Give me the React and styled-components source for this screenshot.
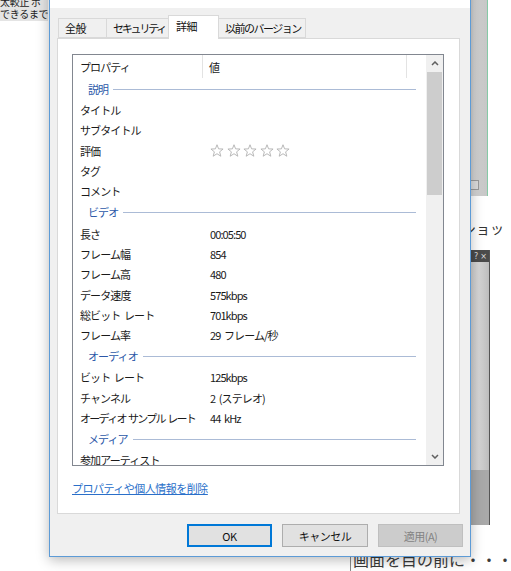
import React from 'react'
import styled, { createGlobalStyle } from 'styled-components'

const GlobalStyle = createGlobalStyle`
  body {
    margin: 0;
    background: #fff;
    font-family: "Noto Sans CJK JP", "Noto Sans", sans-serif;
  }
`

const Desktop = styled.div`
  position: relative;
  width: 511px;
  height: 571px;
  overflow: hidden;
  background: #fff;
`

/* ---- things behind the dialog ---- */

const NoteSnippet = styled.div`
  position: absolute;
  left: 0;
  top: 0;
  width: 48px;
  height: 21px;
  overflow: hidden;
  background: #e4e4e4;
  color: #222;
  font-size: 10px;
  line-height: 12px;
  letter-spacing: -0.3px;
  white-space: nowrap;
  div:first-child { margin-top: -4px; }
`

const SideStrip = styled.div`
  position: absolute;
  left: 455px;
  top: 0;
  width: 33px;
  height: 196px;
  background: linear-gradient(90deg, #bdbdbd 0%, #d4d4d4 60%, #c6c6c6 100%);
  border-right: 1px solid #86c9a6;
  display: flex;
  flex-direction: column;
  justify-content: flex-end;
  align-items: flex-end;
  padding: 0 8px 6px 0;
  box-sizing: border-box;
`

const StripBox = styled.div`
  width: 10px;
  height: 8px;
  border: 1px solid #9a9a9a;
  background: #dcdcdc;
`

const SideText = styled.div`
  position: absolute;
  left: 462px;
  top: 218px;
  font-size: 14px;
  color: #333;
  white-space: nowrap;
`

const MiniWindow = styled.div`
  position: absolute;
  left: 455px;
  top: 250px;
  width: 35px;
  height: 275px;
  display: flex;
  flex-direction: column;
  border-right: 1px solid #555;
  box-sizing: border-box;
`

const MiniTitle = styled.div`
  height: 12px;
  background: #4b4b4b;
  display: flex;
  justify-content: flex-end;
  align-items: center;
  gap: 2px;
  padding-right: 2px;
  color: #ddd;
  font-size: 8px;
  font-family: "DejaVu Sans", sans-serif;
`

const MiniBody = styled.div`
  flex: 1;
  background: linear-gradient(90deg, #c2c2c2, #d6d6d6 70%, #bcbcbc);
`

const MiniFoot = styled.div`
  height: 55px;
  background: #a9a9a9;
`

const BottomLine = styled.div`
  position: absolute;
  left: 350px;
  top: 548px;
  height: 30px;
  width: 1px;
  background: #8a8a8a;
`

const BottomText = styled.div`
  position: absolute;
  left: 353px;
  top: 549px;
  font-size: 16px;
  line-height: 20px;
  color: #3a3a3a;
  white-space: nowrap;
`

/* ---- the properties dialog ---- */

const Dialog = styled.div`
  position: absolute;
  left: 49px;
  top: -21px;
  width: 422px;
  height: 578px;
  box-sizing: border-box;
  border: 1px solid #5d9bd6;
  background: #f0f0f0;
  box-shadow: 0 3px 12px rgba(0, 0, 0, 0.28);
  display: flex;
  flex-direction: column;
  z-index: 2;
`

const TitleBar = styled.div`
  height: 28px;
  background: #fff;
`

const Body = styled.div`
  flex: 1;
  display: flex;
  flex-direction: column;
  padding: 8px 7px 9px 7px;
`

const TabRow = styled.div`
  height: 22px;
  display: flex;
  align-items: flex-end;
  padding-left: 1px;
  position: relative;
  z-index: 1;
`

const Tab = styled.div`
  box-sizing: border-box;
  width: ${p => p.$w}px;
  height: ${p => (p.$active ? 24 : 20)}px;
  margin-right: -1px;
  margin-bottom: ${p => (p.$active ? -1 : 0)}px;
  padding-left: ${p => (p.$active ? 7 : 6)}px;
  padding-top: ${p => (p.$active ? 2 : 1)}px;
  background: ${p => (p.$active ? '#fff' : '#f0f0f0')};
  border: 1px solid #d9d9d9;
  border-bottom: ${p => (p.$active ? 'none' : '1px solid #d9d9d9')};
  font-size: 11px;
  line-height: 16px;
  letter-spacing: ${p => p.$ls}px;
  color: #111;
  white-space: nowrap;
  overflow: hidden;
`

const Panel = styled.div`
  box-sizing: border-box;
  height: 476px;
  margin-right: 3px;
  background: #fff;
  border: 1px solid #d9d9d9;
  padding: 15px 15px 0 14px;
  display: flex;
  flex-direction: column;
`

const ListBox = styled.div`
  box-sizing: border-box;
  height: 412px;
  border: 1px solid #828790;
  display: flex;
  overflow: hidden;
`

const ListContent = styled.div`
  flex: 1;
  overflow: hidden;
  font-size: 11px;
  letter-spacing: -0.9px;
  word-spacing: 2px;
  color: #1a1a1a;
`

const HeaderRow = styled.div`
  height: 23px;
  display: flex;
  align-items: stretch;
`

const HeaderCell = styled.div`
  width: ${p => p.$w}px;
  box-sizing: border-box;
  padding-left: ${p => p.$pad}px;
  border-right: ${p => (p.$divider ? '1px solid #e3e3e3' : 'none')};
  display: flex;
  align-items: center;
`

const GroupRow = styled.div`
  height: 22px;
  display: flex;
  align-items: center;
  padding-left: 15px;
  padding-right: 10px;
  gap: 5px;
  color: #2c58a8;
`

const GroupLine = styled.div`
  flex: 1;
  height: 1px;
  background: #abbbd6;
`

const Row = styled.div`
  height: 20.3px;
  display: flex;
  align-items: center;
`

const PropCell = styled.div`
  width: 130px;
  padding-left: 7px;
  box-sizing: border-box;
  white-space: pre;
  letter-spacing: ${p => (p.$tight ? '-1.7px' : 'inherit')};
  word-spacing: ${p => (p.$tight ? '1.5px' : 'inherit')};
`

const ValueCell = styled.div`
  padding-left: 7px;
  white-space: pre;
  display: flex;
  gap: 2.5px;
`

const ScrollBar = styled.div`
  width: 17px;
  background: #f0f0f0;
  display: flex;
  flex-direction: column;
`

const ScrollArrow = styled.div`
  height: 17px;
  display: flex;
  align-items: center;
  justify-content: center;
`

const ScrollThumb = styled.div`
  height: 123px;
  margin: 0 1px;
  background: #cdcdcd;
`

const ScrollTrack = styled.div`
  flex: 1;
`

const LinkText = styled.a`
  margin-top: 15px;
  font-size: 11px;
  line-height: 14px;
  letter-spacing: -0.5px;
  color: #2a6fc9;
  text-decoration: underline;
  align-self: flex-start;
  cursor: pointer;
`

const ButtonRow = styled.div`
  margin-top: 10px;
  display: flex;
  justify-content: flex-end;
  gap: 10px;
`

const Button = styled.button`
  box-sizing: border-box;
  width: ${p => p.$w}px;
  height: 23px;
  padding: 0;
  font-family: inherit;
  font-size: 11px;
  letter-spacing: -0.5px;
  background: ${p => (p.$disabled ? '#cccccc' : '#e1e1e1')};
  color: ${p => (p.$disabled ? '#838383' : '#111')};
  border: 1px solid ${p => (p.$primary ? '#0078d7' : p.$disabled ? '#bfbfbf' : '#adadad')};
  box-shadow: ${p => (p.$primary ? 'inset 0 0 0 1px #0078d7' : 'none')};
`

const Star = () => (
  <svg width="14" height="14" viewBox="0 0 15 15">
    <polygon
      points="7.5,0.8 9.2,5.2 14,5.4 10.3,8.4 11.6,13.1 7.5,10.4 3.4,13.1 4.7,8.4 1,5.4 5.8,5.2"
      fill="#fff"
      stroke="#b4b4b4"
      strokeWidth="1"
      strokeLinejoin="round"
    />
  </svg>
)

const Chevron = ({ down }) => (
  <svg width="8" height="5" viewBox="0 0 8 5">
    <polyline
      points={down ? '1,1 4,4 7,1' : '1,4 4,1 7,4'}
      fill="none"
      stroke="#606060"
      strokeWidth="1.5"
    />
  </svg>
)

const groups = [
  {
    name: '説明',
    rows: [['タイトル', ''], ['サブタイトル', ''], ['評価', 'stars'], ['タグ', ''], ['コメント', '']],
  },
  {
    name: 'ビデオ',
    rows: [
      ['長さ', '00:05:50'],
      ['フレーム幅', '854'],
      ['フレーム高', '480'],
      ['データ速度', '575kbps'],
      ['総ビット レート', '701kbps'],
      ['フレーム率', '29 フレーム/秒'],
    ],
  },
  {
    name: 'オーディオ',
    rows: [
      ['ビット レート', '125kbps'],
      ['チャンネル', '2 (ステレオ)'],
      ['オーディオ サンプル レート', '44 kHz', true],
    ],
  },
  { name: 'メディア', rows: [['参加アーティスト', '']] },
]

const tabs = [
  { label: '全般', w: 49, ls: -0.4 },
  { label: 'セキュリティ', w: 63, ls: -2.2 },
  { label: '詳細', w: 51, ls: -0.4, active: true },
  { label: '以前のバージョン', w: 88, ls: -1.5 },
]

const App = () => (
  <Desktop>
    <GlobalStyle />
    <NoteSnippet>
      <div>太較正 ボ</div>
      <div>できるまで</div>
    </NoteSnippet>
    <SideStrip>
      <StripBox />
    </SideStrip>
    <SideText>ショッ</SideText>
    <MiniWindow>
      <MiniTitle>
        <span>?</span>
        <span>×</span>
      </MiniTitle>
      <MiniBody />
      <MiniFoot />
    </MiniWindow>
    <BottomLine />
    <BottomText>画面を目の前に・・・</BottomText>

    <Dialog>
      <TitleBar />
      <Body>
        <TabRow>
          {tabs.map(t => (
            <Tab key={t.label} $w={t.w} $ls={t.ls} $active={t.active}>
              {t.label}
            </Tab>
          ))}
        </TabRow>
        <Panel>
          <ListBox>
            <ListContent>
              <HeaderRow>
                <HeaderCell $w={130} $pad={7} $divider>プロパティ</HeaderCell>
                <HeaderCell $w={204} $pad={6} $divider>値</HeaderCell>
              </HeaderRow>
              {groups.map(g => (
                <React.Fragment key={g.name}>
                  <GroupRow>
                    <span>{g.name}</span>
                    <GroupLine />
                  </GroupRow>
                  {g.rows.map(([k, v, tight]) => (
                    <Row key={k}>
                      <PropCell $tight={tight}>{k}</PropCell>
                      <ValueCell>
                        {v === 'stars' ? [0, 1, 2, 3, 4].map(i => <Star key={i} />) : v}
                      </ValueCell>
                    </Row>
                  ))}
                </React.Fragment>
              ))}
            </ListContent>
            <ScrollBar>
              <ScrollArrow>
                <Chevron />
              </ScrollArrow>
              <ScrollThumb />
              <ScrollTrack />
              <ScrollArrow>
                <Chevron down />
              </ScrollArrow>
            </ScrollBar>
          </ListBox>
          <LinkText>プロパティや個人情報を削除</LinkText>
        </Panel>
        <ButtonRow>
          <Button $w={85} $primary>OK</Button>
          <Button $w={86}>キャンセル</Button>
          <Button $w={85} $disabled>適用(A)</Button>
        </ButtonRow>
      </Body>
    </Dialog>
  </Desktop>
)

export default App
